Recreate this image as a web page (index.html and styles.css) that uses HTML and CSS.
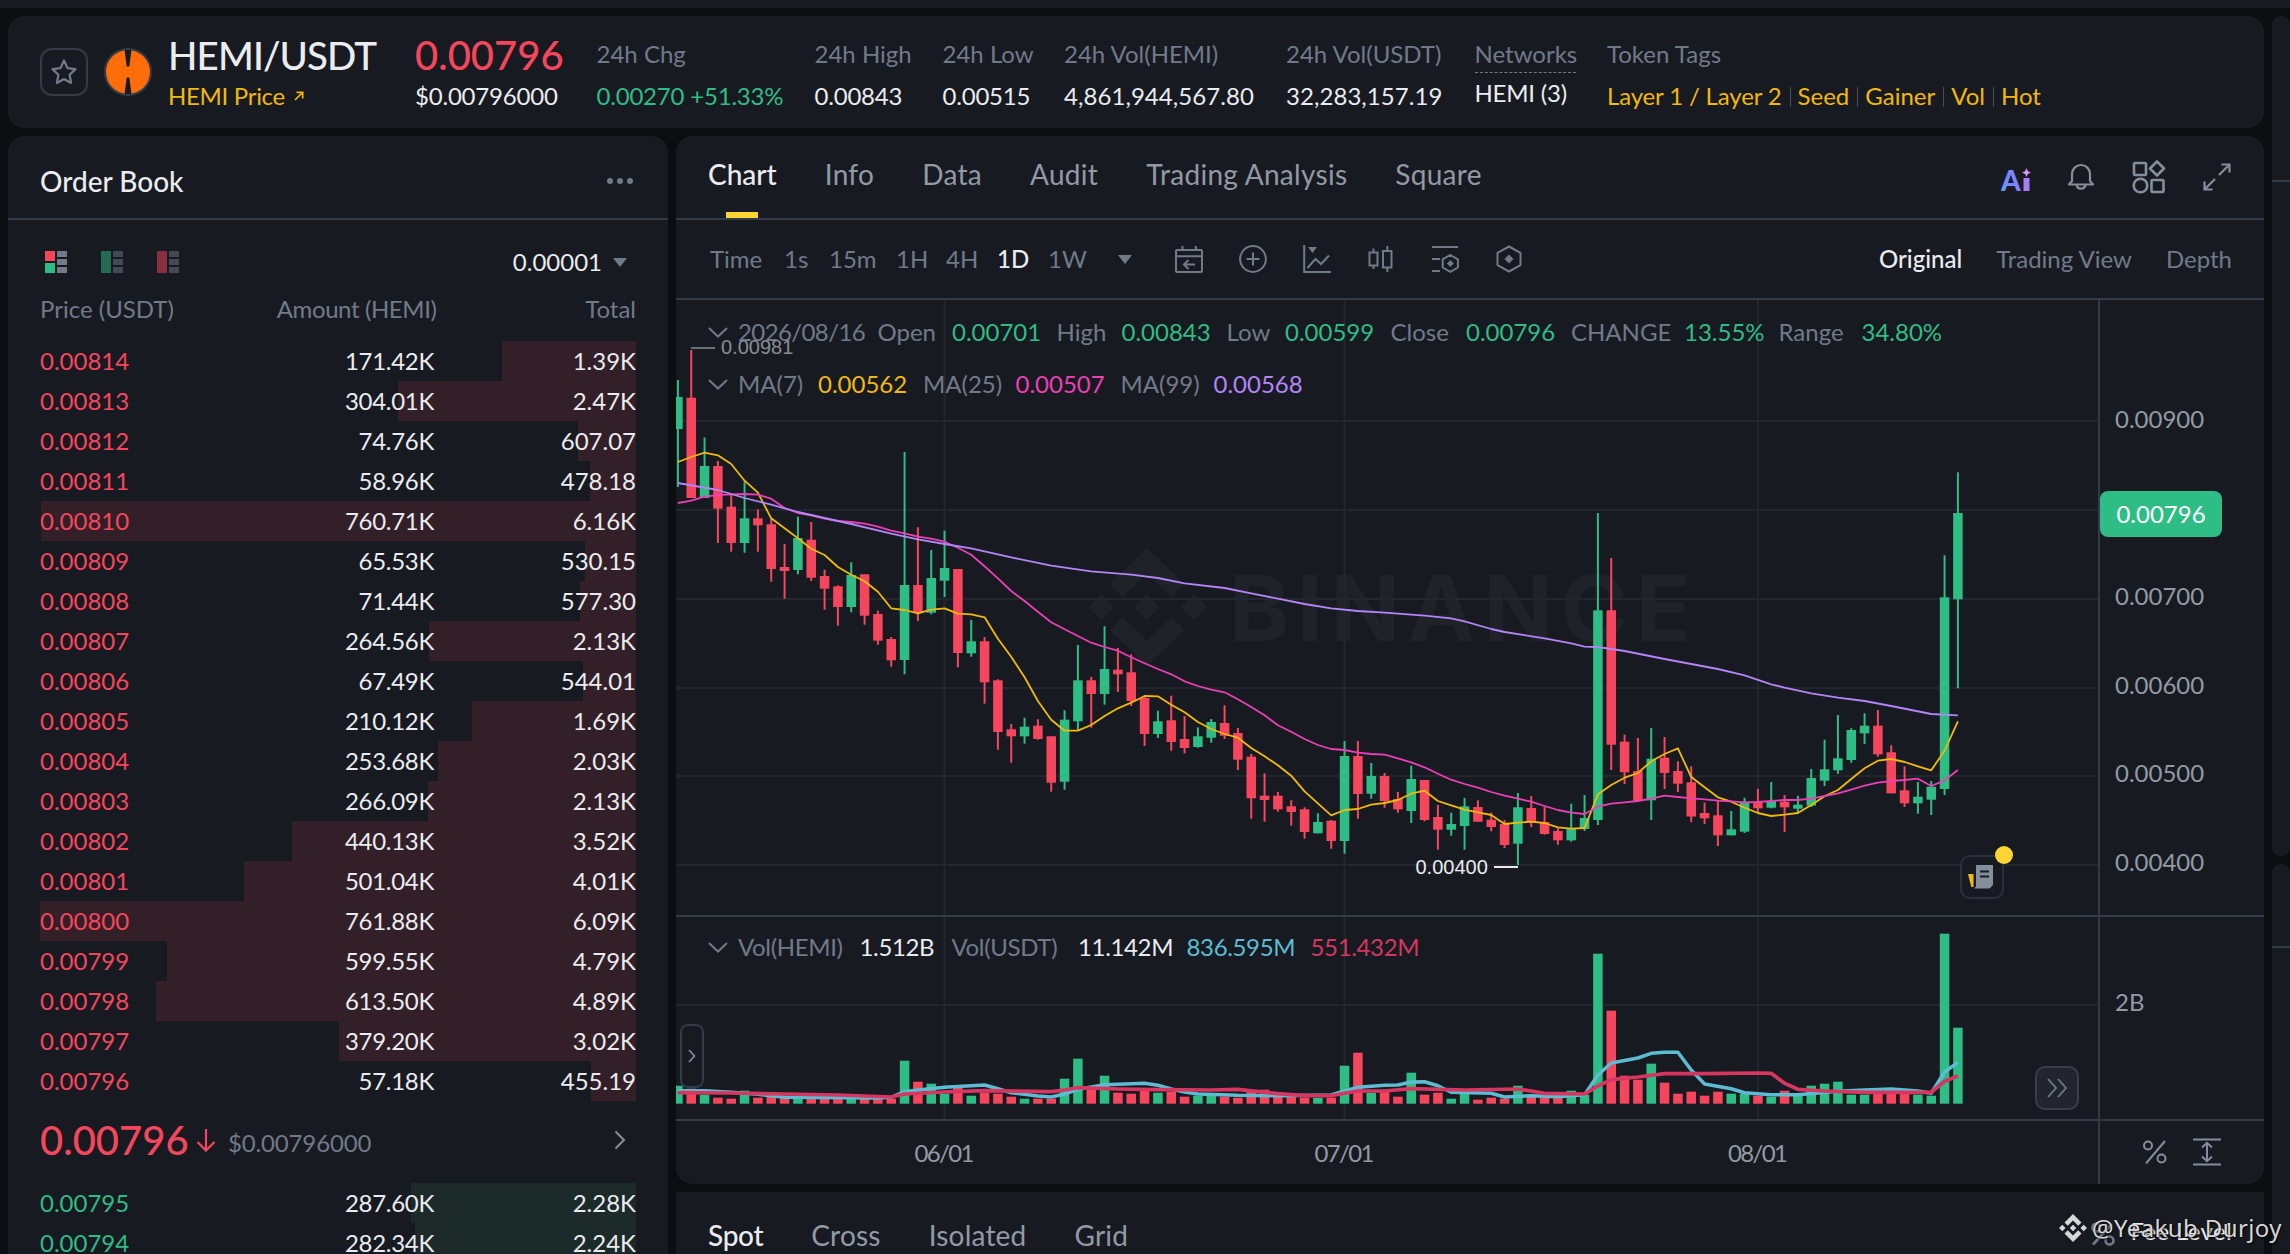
FILE: index.html
```html
<!DOCTYPE html>
<html lang="en">
<head>
    <meta charset="UTF-8">
    <meta name="viewport" content="width=device-width, initial-scale=1.0">
    <title>HEMI/USDT</title>
    <link rel="stylesheet" href="styles.css">
</head>
<body>
    <div class="topbar"></div>
    <div class="page">
        <main class="main">
            <header class="panel header">
                <button class="star">
                    <svg width="28" height="28" viewBox="0 0 28 28"><path d="M14 2.5l3.5 7.6 8 1-5.900 5.700 1.500 8.200-7.100-4-7.100 4 1.500-8.200-5.900-5.700 8-1z" fill="none" stroke="#707a8a" stroke-width="2.200" stroke-linejoin="round"/></svg>
                </button>
                <svg class="coin" width="48" height="48" viewBox="0 0 48 48">
                    <circle cx="24" cy="24" r="24" fill="#333b47"/>
                    <circle cx="24" cy="24" r="22" fill="#ff6c0a"/>
                    <path d="M20.500 2h7l-2.200 16.500h-2.600zM20.500 46h7l-2.200-16.500h-2.600z" fill="#181a21"/>
                </svg>
                <div class="pair">
                    <div class="pair-name">HEMI/USDT</div>
                    <div class="pair-link">HEMI Price <svg width="10" height="10" viewBox="0 0 10 10"><path d="M1 9l7.500-7.500M2.500 1.300h6.200v6.200" fill="none" stroke="#f0b90b" stroke-width="1.700"/></svg></div>
                </div>
                <div class="last">
                    <div class="last-price">0.00796</div>
                    <div class="stat-value">$0.00796000</div>
                </div>
                <div class="stats">
                    <div><div class="stat-label">24h Chg</div><div class="stat-value up">0.00270 +51.33%</div></div>
                    <div><div class="stat-label">24h High</div><div class="stat-value">0.00843</div></div>
                    <div><div class="stat-label">24h Low</div><div class="stat-value">0.00515</div></div>
                    <div><div class="stat-label">24h Vol(HEMI)</div><div class="stat-value wide">4,861,944,567.80</div></div>
                    <div><div class="stat-label">24h Vol(USDT)</div><div class="stat-value wide">32,283,157.19</div></div>
                    <div class="networks"><div class="stat-label">Networks</div><div class="stat-value">HEMI (3)</div></div>
                    <div><div class="stat-label">Token Tags</div><div class="tags"><span>Layer 1 / Layer 2</span><span>Seed</span><span>Gainer</span><span>Vol</span><span>Hot</span></div></div>
                </div>
            </header>

            <section class="panel book">
                <div class="book-head">
                    <h2>Order Book</h2>
                    <svg width="28" height="8" viewBox="0 0 28 8" fill="#707a8a"><circle cx="4" cy="4" r="3"/><circle cx="14" cy="4" r="3"/><circle cx="24" cy="4" r="3"/></svg>
                </div>
                <div class="book-tools">
                    <svg width="22" height="22" viewBox="0 0 22 22"><path fill="#f6465d" d="M0 0h10v10H0z"/><path fill="#2ebd85" d="M0 12h10v10H0z"/><path fill="#707a8a" d="M12 0h10v6H12zM12 8h10v6H12zM12 16h10v6H12z"/></svg>
                    <svg class="dim" width="22" height="22" viewBox="0 0 22 22"><path fill="#2ebd85" d="M0 0h10v22H0z"/><path fill="#707a8a" d="M12 0h10v6H12zM12 8h10v6H12zM12 16h10v6H12z"/></svg>
                    <svg class="dim" width="22" height="22" viewBox="0 0 22 22"><path fill="#f6465d" d="M0 0h10v22H0z"/><path fill="#707a8a" d="M12 0h10v6H12zM12 8h10v6H12zM12 16h10v6H12z"/></svg>
                    <span class="tick">0.00001</span>
                    <svg class="tick-arrow" width="14" height="9" viewBox="0 0 14 9"><path fill="#707a8a" d="M0 0h14L7 9z"/></svg>
                </div>
                <div class="row columns"><span>Price (USDT)</span><span>Amount (HEMI)</span><span>Total</span></div>
                <div class="asks" id="asks"></div>
                <div class="mid">
                    <span class="mid-price">0.00796</span>
                    <svg width="20" height="24" viewBox="0 0 20 24"><path d="M10 1v21M1.500 14L10 22.500 18.500 14" fill="none" stroke="#f6465d" stroke-width="2.200"/></svg>
                    <span class="mid-usd">$0.00796000</span>
                    <svg class="mid-more" width="12" height="20" viewBox="0 0 12 20"><path d="M1.500 1.500L10 10l-8.500 8.500" fill="none" stroke="#848e9c" stroke-width="2"/></svg>
                </div>
                <div class="bids" id="bids"></div>
            </section>

            <section class="panel chart">
                <div class="tabs">
                    <span class="active">Chart</span><span>Info</span><span>Data</span><span>Audit</span><span>Trading Analysis</span><span>Square</span>
                    <div class="tab-icons">
                        <svg class="ai" width="30" height="26" viewBox="0 0 30 26">
                            <defs><linearGradient id="ai" x1="0" y1="1" x2="1" y2="0"><stop offset="0" stop-color="#5ba4f5"/><stop offset=".5" stop-color="#7b84ff"/><stop offset="1" stop-color="#8f84ff"/></linearGradient></defs>
                            <text x="0" y="24" class="ai-text" fill="url(#ai)">A</text>
                            <path d="M22.500 11h6v13h-6z" fill="#a97cf8"/>
                            <path d="M25.500 1l1.400 3.200L30 5.500l-3.100 1.400L25.500 10l-1.400-3.100L21 5.500l3.100-1.300z" fill="#d59bf0"/>
                        </svg>
                        <svg width="28" height="28" viewBox="0 0 28 28" fill="none" stroke="#848e9c" stroke-width="2.200"><path d="M5 18v-7a9 9 0 0 1 18 0v7l3 3.500H2z" stroke-linejoin="round"/><path d="M9.500 22a4.600 4.600 0 0 0 9 0"/></svg>
                        <svg width="34" height="34" viewBox="0 0 34 34" fill="none" stroke="#848e9c" stroke-width="2.600"><rect x="2" y="3" width="12" height="12" rx="1"/><path d="M25 1.500l7 7-7 7-7-7z" stroke-linejoin="round"/><circle cx="8.500" cy="25.500" r="6.800"/><rect x="19.500" y="20" width="12" height="12" rx="1"/></svg>
                        <svg width="28" height="28" viewBox="0 0 28 28" fill="none" stroke="#848e9c" stroke-width="2.200"><path d="M16 12L26.500 1.500M18.500 1.500h8v8M12 16L1.500 26.500M1.500 18.500v8h8"/></svg>
                    </div>
                </div>
                <div class="toolbar">
                    <div class="intervals"><span>Time</span><span>1s</span><span>15m</span><span>1H</span><span>4H</span><span class="active">1D</span><span>1W</span></div>
                    <svg class="more" width="14" height="9" viewBox="0 0 14 9"><path fill="#707a8a" d="M0 0h14L7 9z"/></svg>
                    <div class="tools">
                        <svg width="28" height="28" viewBox="0 0 28 28"><rect x="1" y="5" width="26" height="22" rx="1"/><path d="M1 11.300h26M7.500 1v4M20.800 1v4M20 19.500H9M13.500 15L9 19.500l4.500 4.500"/></svg>
                        <svg width="28" height="28" viewBox="0 0 28 28"><circle cx="14" cy="14" r="12.900"/><path d="M14 7.500v13M7.500 14h13"/></svg>
                        <svg width="28" height="28" viewBox="0 0 28 28"><path d="M1.200 0v27H28M4.500 23l8-9 5.500 5L26 10.500"/><path d="M5 2h9l-4.500 6z" fill="#707a8a" stroke="none"/></svg>
                        <svg width="28" height="28" viewBox="0 0 28 28"><rect x="2.500" y="7.500" width="8" height="13"/><rect x="16" y="6" width="8.500" height="16.500"/><path d="M6.500 3.500v4M6.500 20.500v3.500M20.300 1v5M20.300 22.500v4.500"/></svg>
                        <svg width="28" height="28" viewBox="0 0 28 28"><path d="M1 2h26M1 14h8M1 26h8M19.300 10l7.600 4.300v8.200l-7.600 4.300-7.600-4.300v-8.200z"/><path d="M19.300 15l3.500 3.500-3.500 3.500-3.500-3.500z" fill="#707a8a" stroke="none"/></svg>
                        <svg width="28" height="28" viewBox="0 0 28 28"><path d="M14 1.500L25.500 7.800v12.400L14 26.500 2.500 20.200V7.800z" stroke-linejoin="round"/><path d="M14 9.500l4.500 4.500-4.500 4.500L9.500 14z" fill="#707a8a" stroke="none"/></svg>
                    </div>
                    <div class="views"><span class="active">Original</span><span>Trading View</span><span>Depth</span></div>
                </div>
                <div class="plot">
                    <svg id="plot" width="1588" height="884" viewBox="676 300 1588 884"></svg>
                    <div class="legend legend-price">
                        <svg width="20" height="11" viewBox="0 0 20 11"><path d="M1 1l9 8.500L19 1" fill="none" stroke="#707a8a" stroke-width="2"/></svg>
                        <span class="date">2026/08/16</span><span>Open</span><b class="up">0.00701</b><span>High</span><b class="up">0.00843</b><span>Low</span><b class="up">0.00599</b><span>Close</span><b class="up">0.00796</b><span>CHANGE</span><b class="up">13.55%</b><span>Range</span><b class="up">34.80%</b>
                    </div>
                    <div class="legend legend-ma">
                        <svg width="20" height="11" viewBox="0 0 20 11"><path d="M1 1l9 8.500L19 1" fill="none" stroke="#707a8a" stroke-width="2"/></svg>
                        <span>MA(7)</span><b class="ma7">0.00562</b><span>MA(25)</span><b class="ma25">0.00507</b><span>MA(99)</span><b class="ma99">0.00568</b>
                    </div>
                    <div class="legend legend-vol">
                        <svg width="20" height="11" viewBox="0 0 20 11"><path d="M1 1l9 8.500L19 1" fill="none" stroke="#707a8a" stroke-width="2"/></svg>
                        <span>Vol(HEMI)</span><b>1.512B</b><span>Vol(USDT)</span><b>11.142M</b><b class="vol5">836.595M</b><b class="vol10">551.432M</b>
                    </div>
                    <div class="price-tag">0.00796</div>
                    <button class="drawer"><svg width="8" height="14" viewBox="0 0 8 14"><path d="M1 1l5.500 6L1 13" fill="none" stroke="#848e9c" stroke-width="1.700"/></svg></button>
                    <button class="latest"><svg width="20" height="20" viewBox="0 0 20 20"><path d="M1 1l8 9-8 9M11 1l8 9-8 9" fill="none" stroke="#707a8a" stroke-width="1.800"/></svg></button>
                    <button class="news">
                        <svg width="28" height="24" viewBox="0 0 28 24"><path d="M0 9h5.500v13H3.300z" fill="#f0b90b"/><path d="M8 0h17v20l-3.500 3.500H6l2-2z" fill="#848e9c"/><path d="M12 6.500h9M12 11.500h9" stroke="#181a20" stroke-width="2.200"/></svg>
                        <i class="dot"></i>
                    </button>
                    <svg class="scale-percent" width="24" height="24" viewBox="0 0 24 24" fill="none" stroke="#848e9c" stroke-width="2"><circle cx="5" cy="5.500" r="4"/><circle cx="18.500" cy="18.500" r="4"/><path d="M22 1L3 23.500"/></svg>
                    <svg class="scale-auto" width="28" height="28" viewBox="0 0 28 28" fill="none" stroke="#848e9c" stroke-width="2"><path d="M0 1.500h28M0 26.500h28M14 5v18M9 9.500L14 4.800l5 4.700M9 18.500l5 4.700 5-4.700"/></svg>
                </div>
            </section>

            <section class="panel trade">
                <div class="trade-tabs"><span class="active">Spot</span><span>Cross</span><span>Isolated</span><span>Grid</span></div>
                <div class="fee">
                    <svg width="24" height="24" viewBox="0 0 24 24" fill="none" stroke="#707a8a" stroke-width="2.600"><circle cx="5.500" cy="5.500" r="4"/><circle cx="18.500" cy="18.500" r="4"/><path d="M21 2L2 22.500"/></svg>
                    <span>Fee Level</span>
                </div>
            </section>
        </main>
        <aside class="side">
            <div class="panel side-top"></div>
            <div class="panel side-bottom"></div>
        </aside>
    </div>
    <div class="credit">
        <svg width="28" height="28" viewBox="0 0 28 28" fill="#d6d7d9"><path d="M14 0l8.500 8.500-3.300 3.300L14 6.600l-5.200 5.200-3.300-3.300zM14 28l8.500-8.500-3.300-3.300-5.200 5.200-5.200-5.200-3.300 3.300zM3.300 10.700L6.600 14l-3.300 3.300L0 14zM24.700 10.700L28 14l-3.300 3.300-3.300-3.300zM14 10.700l3.300 3.300-3.300 3.300-3.300-3.300z"/></svg>
        <span>@Yeakub Durjoy</span>
    </div>
    <script src="script.js"></script>
</body>
</html>
```
FILE: styles.css
```css
* {
    box-sizing: border-box;
}
body {
    margin: 0;
    width: 2290px;
    height: 1254px;
    overflow: hidden;
    position: relative;
    background-color: #0b0e11;
    color: #eaecef;
    font-family: Lato, "Noto Sans", sans-serif;
    font-size: 24px;
    line-height: 30px;
}
button {
    padding: 0;
    background: none;
    display: flex;
    align-items: center;
    justify-content: center;
}
svg {
    display: block;
    flex: none;
}
.topbar {
    height: 8px;
    background-color: #181a21;
}
.page {
    display: flex;
    gap: 8px;
    padding: 8px 0 0 8px;
}
.main {
    flex: none;
    width: 2256px;
    height: 1238px;
    display: grid;
    grid-template-columns: 660px 1588px;
    grid-template-rows: 112px 1048px 62px;
    gap: 8px;
}
.panel {
    background-color: #181a21;
    border-radius: 16px;
}
.up {
    color: #2ebd85;
}

/* header */
.header {
    grid-column: 1 / 3;
    display: flex;
    align-items: flex-start;
    padding-left: 32px;
    white-space: nowrap;
}
.star {
    width: 48px;
    height: 48px;
    margin-top: 32px;
    border: 2px solid #333b47;
    border-radius: 12px;
}
.coin {
    margin: 32px 0 0 16px;
}
.pair {
    width: 247px;
    margin-left: 16px;
    padding-top: 16px;
}
.pair-name {
    font-size: 38.500px;
    line-height: 46px;
    font-weight: 500;
    letter-spacing: -0.9px;
}
.pair-link {
    display: flex;
    align-items: center;
    gap: 9px;
    margin-top: 3px;
    color: #f0b90b;
    letter-spacing: -0.3px;
}
.last {
    width: 181.500px;
    padding-top: 16px;
}
.last-price {
    font-size: 40px;
    line-height: 46px;
    margin-bottom: 3px;
    font-weight: 500;
    color: #f6465d;
}
.stat-value {
    letter-spacing: -0.2px;
}
.stat-value.wide {
    letter-spacing: 0.05px;
}
.stats {
    display: grid;
    grid-template-columns: 218px 128px 121.500px 222px 188.500px 132.500px auto;
    padding-top: 23px;
}
.stat-label {
    color: #707a8a;
    margin-bottom: 12px;
}
.networks .stat-label {
    width: 101px;
    height: 34px;
    margin-bottom: 5px;
    border-bottom: 1px dashed #707a8a;
}
.tags {
    display: flex;
    color: #f0b90b;
}
.tags span:first-child {
    letter-spacing: -0.15px;
}
.tags span + span {
    margin-left: 8px;
    padding-left: 8px;
    background: linear-gradient(#474d57, #474d57) no-repeat 0 6px / 1px 20px;
}

/* order book */
.book {
    grid-row: 2 / 4;
    border-radius: 16px 16px 0 0;
    overflow: hidden;
}
.book-head {
    height: 84px;
    display: flex;
    align-items: center;
    justify-content: space-between;
    padding: 7px 34px 0 32px;
    border-bottom: 2px solid #333b47;
}
.book-head h2 {
    margin: 0;
    font-size: 28px;
    font-weight: 500;
}
.book-tools {
    display: flex;
    align-items: center;
    gap: 34px;
    height: 84px;
    padding: 0 41px 0 37px;
}
.dim {
    opacity: 0.5;
}
.tick {
    margin-left: auto;
}
.tick-arrow {
    margin-left: -23px;
}
.row {
    position: relative;
    display: grid;
    grid-template-columns: 200px 194px 202px;
    height: 40px;
    padding-left: 32px;
    line-height: 40px;
}
.row span {
    position: relative;
    text-align: right;
}
.row span:first-child {
    text-align: left;
}
.columns {
    margin-bottom: 14px;
    height: 23px;
    line-height: 9px;
    color: #707a8a;
}
.columns span:nth-child(2) {
    left: 2.500px;
    letter-spacing: -0.4px;
}
.bar {
    position: absolute;
    right: 32px;
    top: 0;
    height: 40px;
}
.asks .bar {
    background-color: #331f27;
}
.bids .bar {
    background-color: #1c2a2a;
}
.asks span:nth-child(2) {
    color: #f6465d;
}
.bids span:nth-child(2) {
    color: #2ebd85;
}
.asks .row span:nth-child(2), .bids .row span:nth-child(2) {
    text-align: left;
}
.asks .row span:nth-child(3), .bids .row span:nth-child(3) {
    letter-spacing: -0.3px;
}
.mid {
    height: 82px;
    display: flex;
    align-items: center;
    padding: 0 42px 4px 32px;
}
.mid-price {
    width: 156px;
    font-size: 40px;
    font-weight: 500;
    color: #f6465d;
}
.mid-usd {
    margin: 5px auto 0 12px;
    color: #707a8a;
    letter-spacing: -0.15px;
}

/* chart */
.tabs {
    display: flex;
    gap: 48px;
    height: 84px;
    padding: 0 33px 0 32px;
    border-bottom: 2px solid #333b47;
    font-size: 28px;
    line-height: 76px;
    letter-spacing: 0.3px;
    color: #929aa5;
}
.tabs .active {
    background: linear-gradient(#fcd535, #fcd535) no-repeat center bottom / 32px 6px;
    letter-spacing: 0;
}
.active {
    color: #eaecef;
    font-weight: 500;
}
.tab-icons {
    display: flex;
    align-items: center;
    gap: 37px;
    margin-left: auto;
}
.ai {
    margin: 6px -1px 0 0;
}
.ai-text {
    font: 900 28px Lato, sans-serif;
}
.toolbar {
    display: flex;
    align-items: center;
    height: 80px;
    padding: 0 32px 0 34px;
    border-bottom: 2px solid #333b47;
    color: #707a8a;
}
.intervals {
    display: grid;
    grid-template-columns: 74px 45px 67px 50px 51px 51px 69.500px;
}
.tools {
    display: flex;
    gap: 36px;
    margin-left: 43px;
}
.tools svg {
    fill: none;
    stroke: #707a8a;
    stroke-width: 2;
}
.views {
    display: flex;
    gap: 34px;
    margin-left: auto;
}
.plot {
    position: relative;
    height: 884px;
}
.legend {
    position: absolute;
    left: 32px;
    display: grid;
    align-items: center;
    white-space: nowrap;
    color: #707a8a;
}
.legend b {
    font-weight: 400;
}
.legend-price {
    top: 17px;
    grid-template-columns: 30px 139.500px 74.500px 104.500px 65px 105px 58.500px 105.500px 75.500px 105px 113px 94.500px 83px auto;
}
.date {
    letter-spacing: -0.6px;
}
.legend-ma {
    top: 69px;
    grid-template-columns: 30px 80px 105px 92.500px 105px 93px auto;
}
.legend-vol {
    top: 632px;
    grid-template-columns: 30px 121.500px 92px 126.500px 108.500px 124px auto;
    letter-spacing: -0.35px;
}
.legend-vol b {
    color: #eaecef;
}
.legend .ma7 {
    color: #f0b90b;
}
.legend .ma25 {
    color: #eb40b5;
}
.legend .ma99 {
    color: #b385f8;
}
.legend .vol5 {
    color: #5dbcd2;
}
.legend .vol10 {
    color: #d6365f;
}
.grid {
    stroke: #23262d;
    stroke-width: 2;
}
.frame {
    stroke: #333b47;
    stroke-width: 2;
}
.axis {
    fill: #929aa5;
    font-size: 24px;
}
.mark {
    font: 20px "Liberation Sans", sans-serif;
}
.brand {
    fill: #1f2229;
    font: 700 91px Inter, sans-serif;
}
.line {
    fill: none;
    stroke-linejoin: round;
}
.price-tag {
    position: absolute;
    left: 1424px;
    top: 191px;
    width: 122px;
    height: 46px;
    border-radius: 8px;
    background-color: #2ebd85;
    color: #fff;
    line-height: 46px;
    text-align: center;
}
.drawer {
    position: absolute;
    left: 4px;
    top: 724px;
    width: 24px;
    height: 64px;
    border: 2px solid #333b47;
    border-radius: 8px;
    background-color: #181a21;
}
.latest {
    position: absolute;
    left: 1359px;
    top: 766px;
    width: 44px;
    height: 44px;
    border: 2px solid #3a3e47;
    border-radius: 10px;
    background-color: #22252b;
}
.news {
    position: absolute;
    left: 1284px;
    top: 555px;
    width: 44px;
    height: 44px;
    border: 2px solid #2b3039;
    border-radius: 10px;
    background-color: #181a21;
}
.dot {
    position: absolute;
    right: -11px;
    top: -11px;
    width: 18px;
    height: 18px;
    border-radius: 50%;
    background-color: #fcd535;
}
.scale-percent {
    position: absolute;
    left: 1467px;
    top: 840px;
}
.scale-auto {
    position: absolute;
    left: 1517px;
    top: 838px;
}

/* trade form */
.trade {
    border-radius: 0;
    display: flex;
    justify-content: space-between;
    padding: 28px 32px 0;
}
.trade-tabs {
    display: flex;
    gap: 48px;
    font-size: 28px;
    letter-spacing: 0.2px;
    color: #929aa5;
}
.trade-tabs .active {
    letter-spacing: -0.3px;
}
.fee {
    display: flex;
    gap: 16px;
    margin-top: -4px;
    letter-spacing: 0.35px;
}
.fee svg {
    margin-top: 6px;
}

.side {
    width: 60px;
    display: flex;
    flex-direction: column;
    gap: 8px;
}
.side-top {
    height: 840px;
    background-image: linear-gradient(#333b47, #333b47);
    background-size: 100% 2px;
    background-position: 0 164px;
    background-repeat: no-repeat;
}
.side-bottom {
    height: 400px;
    background-image: linear-gradient(#333b47, #333b47);
    background-size: 100% 2px;
    background-position: 0 82px;
    background-repeat: no-repeat;
}
.credit {
    position: absolute;
    left: 2059px;
    top: 1213px;
    display: flex;
    align-items: center;
    gap: 5px;
    font-family: "Noto Sans", sans-serif;
    letter-spacing: 0.4px;
    color: #d6d7d9;
    text-shadow: 1px 1px 2px #000;
    white-space: nowrap;
}
```
FILE: script.js
```js
const asks = [
    ['0.00814', '171.42K', '1.39K'], ['0.00813', '304.01K', '2.47K'], ['0.00812', '74.76K', '607.07'],
    ['0.00811', '58.96K', '478.18'], ['0.00810', '760.71K', '6.16K'], ['0.00809', '65.53K', '530.15'],
    ['0.00808', '71.44K', '577.30'], ['0.00807', '264.56K', '2.13K'], ['0.00806', '67.49K', '544.01'],
    ['0.00805', '210.12K', '1.69K'], ['0.00804', '253.68K', '2.03K'], ['0.00803', '266.09K', '2.13K'],
    ['0.00802', '440.13K', '3.52K'], ['0.00801', '501.04K', '4.01K'], ['0.00800', '761.88K', '6.09K'],
    ['0.00799', '599.55K', '4.79K'], ['0.00798', '613.50K', '4.89K'], ['0.00797', '379.20K', '3.02K'],
    ['0.00796', '57.18K', '455.19']
];
const bids = [['0.00795', '287.60K', '2.28K'], ['0.00794', '282.34K', '2.24K']];
const maxAmount = 761.88;

function fillBook(id, rows) {
    document.getElementById(id).innerHTML = rows.map(([price, amount, total]) => {
        const width = parseFloat(amount) / maxAmount * 596;
        return `<div class="row"><div class="bar" style="width:${width.toFixed(1)}px"></div><span>${price}</span><span>${amount}</span><span>${total}</span></div>`;
    }).join('');
}
fillBook('asks', asks);
fillBook('bids', bids);

// [up, high, body top, body bottom, low]
const candles = [
    [1, 380, 397, 429, 487], [0, 350, 397.7, 498, 498], [1, 437.5, 466, 498, 498], [0, 461, 466, 508.7, 543],
    [0, 495, 506.7, 543, 551.7], [1, 481.7, 518.3, 543, 552.7], [0, 509.5, 518.3, 525.3, 551.7], [0, 519, 524.3, 569, 581.7],
    [0, 544, 567, 571, 598.7], [1, 516.7, 538, 570, 574.3], [0, 522, 539.7, 577.7, 581], [0, 569.7, 576, 588.7, 609.7],
    [0, 585.3, 586.3, 607, 625.7], [1, 562.3, 575, 607, 612.3], [0, 574.3, 574.3, 615.7, 624.7], [0, 610.7, 614, 640.7, 644.7],
    [0, 637, 639, 660.3, 666.7], [1, 452, 585, 660, 674.3], [0, 527.3, 585, 612.7, 621], [1, 550, 578, 612.7, 614.3],
    [1, 530.7, 568, 580.7, 597], [0, 569, 569, 653, 667.3], [1, 620, 641.3, 653.3, 656.7], [0, 637, 641.3, 682.3, 703.7],
    [0, 679.3, 680.3, 732, 749.7], [0, 724, 729.3, 736.3, 762.7], [1, 717.7, 726.7, 736.3, 743.7], [0, 719.3, 725.7, 739, 739.7],
    [0, 736.3, 736.3, 782.7, 791.7], [1, 710.3, 719.7, 781.7, 789.7], [1, 645, 680.3, 721.3, 730], [0, 677, 680.3, 694, 727.7],
    [1, 626.3, 669, 694, 704.7], [0, 648, 669.7, 674.3, 692], [0, 654.3, 672.3, 701, 706], [0, 695.7, 698, 734, 746],
    [1, 710.7, 721.3, 734, 738], [0, 695.7, 720.3, 742, 750.7], [0, 716, 739, 748, 753.3], [1, 727.3, 736.3, 747, 747.7],
    [1, 719, 722, 737.7, 742.7], [0, 705.3, 723, 735.7, 739], [0, 728, 733, 759.7, 770], [0, 754, 756.7, 798.3, 818.7],
    [0, 773.3, 795.7, 800, 821.7], [0, 792, 795.7, 809.3, 811.7], [0, 800.3, 806.3, 812, 825.7], [0, 807.3, 809.3, 832, 838.7],
    [1, 813.3, 822, 833.3, 833.3], [0, 820, 820.7, 841, 848.7], [1, 741, 756, 841, 853.7], [0, 741, 756, 794, 818.7],
    [1, 763, 776, 793.7, 798.7], [0, 773, 776, 801, 807.7], [0, 792, 799, 809.3, 812.7], [1, 765.7, 779, 811, 823],
    [0, 780, 780, 820, 821.3], [0, 805, 817, 829.7, 849.7], [1, 812.7, 824, 829.7, 835.7], [1, 798, 806.3, 826, 849.7],
    [0, 800.3, 807, 821.7, 821.7], [0, 812.7, 819.7, 827, 831.3], [0, 820, 824, 845, 848], [1, 793, 807.3, 843.7, 865],
    [0, 796, 808, 822.7, 827], [0, 806.7, 822, 834, 834.7], [0, 828.3, 831, 840.3, 844.7], [1, 803.7, 828.3, 840.3, 841.7],
    [1, 795, 818, 829, 831], [1, 513, 610.3, 820, 825], [0, 558, 610.3, 744.7, 770], [0, 734.7, 741.7, 772.3, 784],
    [0, 738, 771, 801, 801], [1, 728, 758.7, 800.3, 820], [0, 737, 757.7, 773, 789], [0, 761.3, 771, 783.7, 792],
    [0, 766.3, 782.3, 816.5, 822.3], [0, 802.7, 813, 818.3, 824], [0, 800.7, 815.3, 835.3, 846], [1, 811, 829.3, 835.3, 835.3],
    [1, 797.7, 801.7, 831.7, 833], [0, 788.7, 801.7, 808.3, 812.3], [1, 782, 801, 807.7, 808.3], [0, 795, 801.7, 807.3, 832],
    [1, 795.7, 804.7, 808.7, 812], [1, 769, 778, 805.7, 807], [1, 739.7, 769.3, 780.7, 786], [1, 715, 758.3, 770.3, 773.7],
    [1, 728.3, 730, 760, 762.7], [1, 713.3, 725.7, 733.3, 744], [0, 710, 725.7, 754.3, 756.7], [0, 745.3, 752.3, 793.3, 793.3],
    [0, 766.3, 790.3, 803.3, 807], [1, 782, 796.7, 803.3, 813.7], [1, 781, 786.7, 799.7, 815], [1, 555.3, 597.3, 789, 795],
    [1, 472.3, 513, 599.3, 688.3]
];

// bar heights, one per candle
const volumes = [
    18, 15, 9, 6, 5, 13, 6, 7, 7, 7, 7, 6, 6, 6, 5, 5, 5, 43, 22, 20, 10, 16, 8, 11, 10, 7, 5, 5, 5, 25,
    45, 14, 28, 11, 10, 13, 11, 12, 7, 8, 8, 7, 6, 13, 14, 9, 7, 6, 6, 6, 38, 51, 11, 12, 7, 31, 9, 11, 5, 11,
    4, 6, 5, 18, 9, 6, 6, 13, 9, 150, 93, 28, 24, 40, 21, 10, 12, 8, 12, 10, 10, 8, 7, 13, 9, 18, 20, 22, 9, 9,
    12, 11, 11, 9, 8, 170, 76
];

// moving averages as [candle index, y]
const dense = list => list.map((y, i) => [i, y]);
const ma7 = dense([
    462, 457, 452.7, 455.3, 464, 480.7, 492.7, 518.3, 528.3, 538.3, 548.7, 555, 567, 574.7, 581.3, 591.7, 608.3, 610, 613.3, 609.7,
    608.3, 613.7, 614.3, 617.3, 638.7, 656.7, 677.3, 701, 719.7, 730.7, 730.7, 725, 716, 708.3, 702.7, 696, 696.3, 704.7, 712.3, 722,
    729, 734, 737.7, 748, 756.3, 765.3, 775.7, 791.3, 803.3, 815.3, 810, 809, 804.7, 803, 800, 793.7, 790.7, 801, 805.3, 809.7,
    812.3, 815, 824, 822.7, 821.7, 823, 827.3, 828.7, 828, 794.3, 785, 777.7, 773, 761.3, 754, 748.3, 777, 787.3, 797.3, 801.7,
    807.7, 813, 816, 814.7, 813, 805, 796.3, 790, 779, 768.3, 760.7, 759, 762, 766.3, 770.3, 750.7, 721.3
]);
const ma25 = dense([
    503, 500.7, 496.7, 495, 494.3, 494, 494.7, 498.7, 508, 513, 515.3, 518.7, 521, 522, 523.7, 526.7, 530.7, 533.3, 536.7, 538.7,
    541.7, 547.7, 554.7, 566.3, 578.3, 591, 601, 611.7, 622.3, 629.3, 636, 642.7, 647, 650.7, 657.3, 663.3, 669, 674.3, 681.3, 686,
    689.7, 692.3, 699.3, 707, 715.3, 725.3, 731.7, 739, 745, 749, 750, 752.7, 754, 754.7, 758.3, 762.3, 767.3, 773.7, 779.7, 784,
    787.7, 792, 795.7, 798.7, 801.7, 806, 810, 812.7, 814, 806.7, 803.7, 802.3, 801, 798.7, 795.7, 797, 798.3, 799.3, 800.7, 801.3,
    802.3, 802, 801, 800, 800, 798.7, 796, 793.3, 789.7, 785.7, 782.7, 781, 780, 778.7, 786, 780.3, 770
]);
const ma99 = [
    [0, 483], [3, 490], [5, 498], [7, 504.7], [9, 512], [11, 518], [13, 524], [16, 533.7], [18, 539.3], [20, 544], [22, 548.3],
    [25, 557.3], [28, 565.7], [31, 571.3], [34, 574.7], [36, 578], [38, 583.3], [41, 588], [43, 593.3], [45, 598.7], [47, 604],
    [49, 608.3], [51, 611], [53, 612.7], [56, 615.7], [58, 618.3], [59, 621.3], [61, 629], [62, 632], [65, 638.3], [67, 643.3],
    [68, 646.7], [69, 647], [71, 651], [74, 659], [76, 664], [78, 669], [80, 675.3], [82, 684.3], [83, 687.7], [85, 693.3],
    [87, 697.7], [89, 701], [91, 706], [94, 714], [96, 715.3]
];
const vol5 = [
    [0, 1090.7], [2, 1090.7], [4, 1092.3], [6, 1094.3], [8, 1097.3], [13, 1097.7], [15, 1098], [16, 1097.3], [17, 1091.7], [18, 1090],
    [20, 1087.3], [21, 1086.5], [23, 1085], [24, 1088.7], [25, 1092.7], [27, 1096], [28, 1097], [29, 1094], [30, 1089.3], [32, 1084.7],
    [35, 1083.3], [36, 1085.3], [37, 1089], [38, 1092], [39, 1094], [42, 1095.3], [45, 1095.7], [49, 1095], [50, 1091], [51, 1087.3],
    [53, 1085.3], [54, 1085], [55, 1082], [56, 1081.7], [57, 1085.7], [58, 1092.3], [61, 1093.3], [62, 1097], [64, 1095.7], [66, 1096.7],
    [68, 1094.7], [69, 1075], [70, 1063], [72, 1058], [73, 1053.3], [74, 1052.3], [75, 1052.3], [76, 1070], [77, 1084], [79, 1088.7],
    [80, 1092.7], [82, 1094.7], [84, 1094.7], [87, 1091.3], [89, 1090], [91, 1089], [93, 1091], [94, 1093.3], [95, 1072], [96, 1062.3]
];
const vol10 = [
    [0, 1092.7], [4, 1093], [8, 1094], [12, 1095], [16, 1097], [17, 1094], [20, 1092], [23, 1090.7], [28, 1091.7], [29, 1090], [30, 1087.7],
    [33, 1089], [36, 1089.7], [40, 1090], [42, 1089.3], [45, 1093.7], [47, 1095.7], [49, 1095.7], [50, 1093.3], [51, 1091], [53, 1091],
    [55, 1088.7], [59, 1090], [63, 1089], [65, 1093.3], [68, 1094], [69, 1086], [70, 1079.7], [72, 1077], [74, 1073.7], [77, 1073.7],
    [81, 1073], [82, 1073.3], [83, 1083.3], [84, 1089.3], [86, 1091], [89, 1092.3], [94, 1092.3], [95, 1081.3], [96, 1076]
];

const green = '#2ebd85';
const red = '#f6465d';
const xAt = i => 677.9 + i * 40 / 3;
const line = (points, color, width) =>
    `<polyline class="line" stroke="${color}" stroke-width="${width}" points="${points.map(([i, y]) => xAt(i).toFixed(1) + ',' + y).join(' ')}"/>`;
const rule = (cls, x1, y1, x2, y2) => `<path class="${cls}" d="M${x1} ${y1}L${x2} ${y2}"/>`;

let out = '';

// brand mark behind the candles
out += '<g fill="#1f2229"><path d="M1147 548l37 36-12.500 13-24.500-24-24.500 24-12.500-13zM1147 666l37-36-12.500-13-24.500 24-24.500-24-12.500 13zM1101 594l13 13-13 13-13-13zM1147 594l13 13-13 13-13-13zM1194 594l13 13-13 13-13-13z"/></g>';
out += '<text class="brand" x="1229" y="641" textLength="462">BINANCE</text>';

[421, 510, 599, 688, 776, 865, 1005].forEach(y => out += rule('grid', 676, y, 2098, y));
[944.5, 1344.5, 1758].forEach(x => out += rule('grid', x, 300, x, 1119));
out += rule('frame', 676, 916, 2264, 916) + rule('frame', 676, 1120, 2264, 1120) + rule('frame', 2099, 300, 2099, 1184);

candles.forEach(([up, high, top, bottom, low], i) => {
    const x = xAt(i);
    const color = up ? green : red;
    out += `<rect x="${x - 1}" y="${high}" width="2" height="${low - high}" fill="${color}"/>`;
    out += `<rect x="${x - 4.75}" y="${top}" width="9.5" height="${bottom - top}" fill="${color}"/>`;
    out += `<rect x="${x - 4.75}" y="${1103.7 - volumes[i]}" width="9.5" height="${volumes[i]}" fill="${color}"/>`;
});
out += line(ma7, '#f0b90b', 1.8) + line(ma25, '#eb40b5', 1.8) + line(ma99, '#b385f8', 1.8);
out += line(vol5, '#5dbcd2', 3.5) + line(vol10, '#d6365f', 3.7);

out += '<path d="M691 348h24" stroke="#848e9c" stroke-width="1.500"/><text class="mark" x="721" y="354" fill="#8a8d93">0.00981</text>';
out += '<text class="mark" x="1415.500" y="873.500" fill="#eaecef">0.00400</text><path d="M1494 867h24" stroke="#eaecef" stroke-width="2"/>';

[['0.00900', 427.5], ['0.00700', 604.5], ['0.00600', 693.5], ['0.00500', 782], ['0.00400', 870.5], ['2B', 1011]]
    .forEach(([label, y]) => out += `<text class="axis" x="2115" y="${y}">${label}</text>`);
[['06/01', 944.5], ['07/01', 1344.5], ['08/01', 1758]]
    .forEach(([label, x]) => out += `<text class="axis" x="${x}" y="1162" text-anchor="middle" textLength="60">${label}</text>`);

document.getElementById('plot').innerHTML = out;
```
